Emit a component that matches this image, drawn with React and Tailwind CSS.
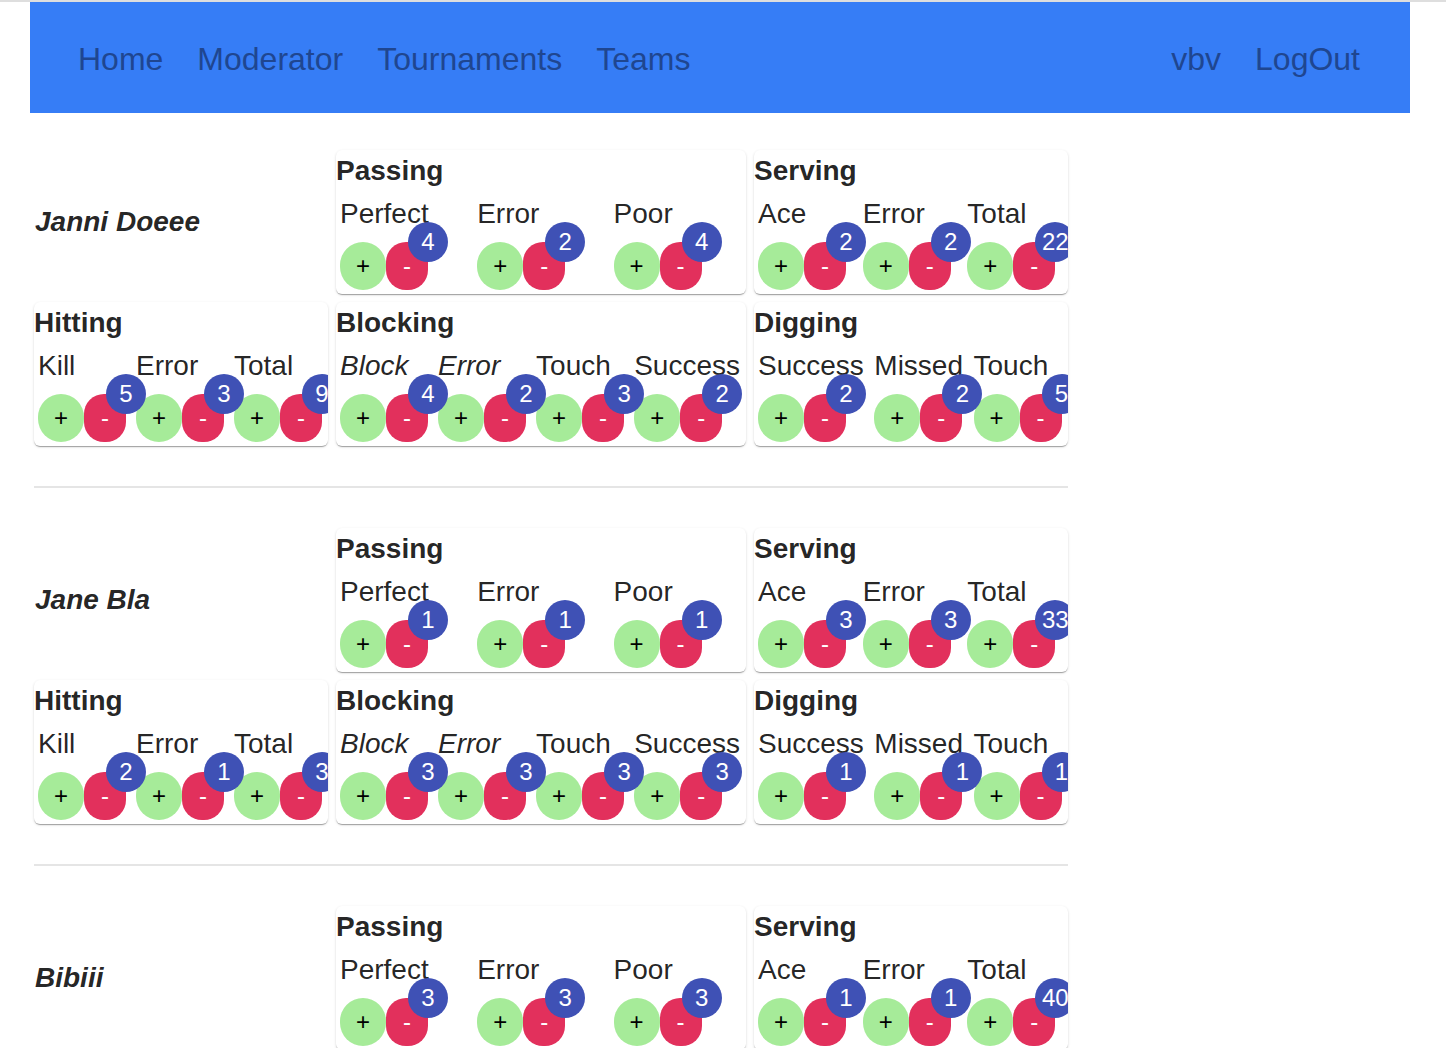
import React from "react";

const players = [
  {
    name: "Janni Doeee",
    passing: [["Perfect", 4], ["Error", 2], ["Poor", 4]],
    serving: [["Ace", 2], ["Error", 2], ["Total", 22]],
    hitting: [["Kill", 5], ["Error", 3], ["Total", 9]],
    blocking: [["Block", 4, true], ["Error", 2, true], ["Touch", 3], ["Success", 2]],
    digging: [["Success", 2], ["Missed", 2], ["Touch", 5]],
  },
  {
    name: "Jane Bla",
    passing: [["Perfect", 1], ["Error", 1], ["Poor", 1]],
    serving: [["Ace", 3], ["Error", 3], ["Total", 33]],
    hitting: [["Kill", 2], ["Error", 1], ["Total", 3]],
    blocking: [["Block", 3, true], ["Error", 3, true], ["Touch", 3], ["Success", 3]],
    digging: [["Success", 1], ["Missed", 1], ["Touch", 1]],
  },
  {
    name: "Bibiii",
    passing: [["Perfect", 3], ["Error", 3], ["Poor", 3]],
    serving: [["Ace", 1], ["Error", 1], ["Total", 40]],
    hitting: [["Kill", 2], ["Error", 1], ["Total", 4]],
    blocking: [["Block", 1, true], ["Error", 1, true], ["Touch", 2], ["Success", 1]],
    digging: [["Success", 2], ["Missed", 1], ["Touch", 3]],
  },
];

function Group({ label, count, italic }) {
  return (
    <div className="grow pl-1 pr-[6px] flex flex-col">
      <div className={"relative top-px text-[28px] leading-[42px] whitespace-nowrap " + (italic ? "italic" : "")}>
        {label}
      </div>
      <div className="mt-2 flex h-12">
        <div className="w-[46px] h-12 rounded-full bg-[#a6eb99] flex items-center justify-center text-[24px] leading-none text-black">
          +
        </div>
        <div className="relative w-[42px] h-12 rounded-[20px] bg-[#e2305c] flex items-center justify-center text-[24px] leading-none text-white">
          -
          <div className="absolute -top-5 -right-5 w-10 h-10 rounded-full bg-[#3f51b5] flex items-center justify-center text-[24px] leading-none text-white">
            {count}
          </div>
        </div>
      </div>
    </div>
  );
}

function Card({ title, items }) {
  return (
    <div className="bg-white rounded-[6px] overflow-hidden pb-1 shadow-[0_2px_1px_-1px_rgba(0,0,0,0.2),0_1px_1px_0_rgba(0,0,0,0.14),0_1px_3px_0_rgba(0,0,0,0.12)]">
      <div className="text-[28px] leading-[42px] font-bold">{title}</div>
      <div className="flex">
        {items.map(([label, count, italic], i) => (
          <Group key={i} label={label} count={count} italic={italic} />
        ))}
      </div>
    </div>
  );
}

function Player({ p }) {
  return (
    <div className="grid grid-cols-[294px_410px_314px] gap-2">
      <div className="flex items-center">
        <div className="text-[28px] leading-[42px] font-bold italic pl-px">{p.name}</div>
      </div>
      <Card title="Passing" items={p.passing} />
      <Card title="Serving" items={p.serving} />
      <Card title="Hitting" items={p.hitting} />
      <Card title="Blocking" items={p.blocking} />
      <Card title="Digging" items={p.digging} />
    </div>
  );
}

export default function App() {
  return (
    <div
      className="min-h-[1048px] bg-white text-[rgba(0,0,0,0.87)]"
      style={{ fontFamily: '"Liberation Sans", Arial, sans-serif' }}
    >
      <div className="h-[2px] bg-[#dedede]" />
      <div className="ml-[30px] w-[1380px] h-[111px] bg-[#367df6] flex items-center justify-between pl-12 pr-[50px] pt-[2px] text-[32px] text-[#1f4690]">
        <nav className="flex gap-[34px]">
          <span>Home</span>
          <span>Moderator</span>
          <span>Tournaments</span>
          <span>Teams</span>
        </nav>
        <nav className="flex gap-[34px]">
          <span>vbv</span>
          <span>LogOut</span>
        </nav>
      </div>
      <main className="pl-[34px] pt-[37px] w-max">
        {players.map((p, i) => (
          <div key={i}>
            {i > 0 && <div className="my-10 h-[2px] bg-[#e5e5e5]" />}
            <Player p={p} />
          </div>
        ))}
      </main>
    </div>
  );
}
